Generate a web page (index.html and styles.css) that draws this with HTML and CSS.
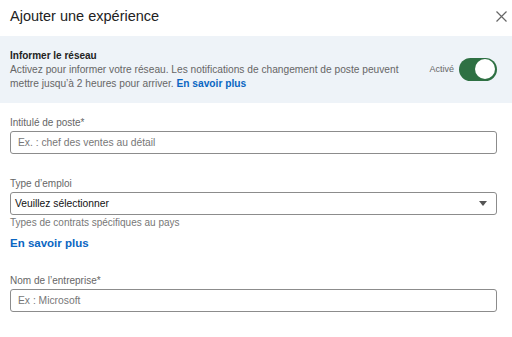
FILE: index.html
```html
<!DOCTYPE html>
<html lang="fr">
<head>
    <meta charset="UTF-8">
    <meta name="viewport" content="width=device-width, initial-scale=1.0">
    <title>Ajouter une expérience</title>
    <link rel="stylesheet" href="styles.css">
</head>
<body>
    <div class="modal">
        <div class="header">
            <h2>Ajouter une expérience</h2>
            <button class="close" aria-label="Fermer">
                <svg width="11" height="11" viewBox="0 0 11 11">
                    <path d="M0.5 0.5 L10.5 10.5 M10.5 0.5 L0.5 10.5" stroke="#666" stroke-width="1.2" fill="none"/>
                </svg>
            </button>
        </div>

        <!-- notify network band -->
        <div class="notify">
            <div class="notify-text">
                <p class="notify-title">Informer le réseau</p>
                <p class="notify-desc">Activez pour informer votre réseau. Les notifications de changement de poste peuvent mettre jusqu’à 2 heures pour arriver. <a href="#">En savoir plus</a></p>
            </div>
            <div class="switch-wrap">
                <span class="switch-label">Activé</span>
                <span class="switch"><span class="knob"></span></span>
            </div>
        </div>

        <div class="form">
            <div class="field">
                <label>Intitulé de poste*</label>
                <input type="text" placeholder="Ex. : chef des ventes au détail">
            </div>

            <div class="field">
                <label>Type d’emploi</label>
                <div class="select">
                    <span>Veuillez sélectionner</span>
                    <svg width="8" height="5" viewBox="0 0 8 5"><path d="M0 0 H8 L4 5 Z" fill="#555"/></svg>
                </div>
                <p class="hint">Types de contrats spécifiques au pays</p>
                <a href="#" class="more">En savoir plus</a>
            </div>

            <div class="field">
                <label>Nom de l’entreprise*</label>
                <input type="text" placeholder="Ex : Microsoft">
            </div>
        </div>
    </div>
</body>
</html>
```

FILE: styles.css
```css
* {
    margin: 0;
    padding: 0;
    box-sizing: border-box;
}

body {
    font-family: "Liberation Sans", Arial, sans-serif;
    background-color: #ffffff;
    color: #222;
}

/* Header */
.header {
    display: flex;
    justify-content: space-between;
    align-items: center;
    height: 36px;
    padding: 0 3px 4px 10px;
}

.header h2 {
    font-size: 14.5px;
    font-weight: normal;
    color: #222;
}

.close {
    background: none;
    border: none;
    width: 16px;
    height: 16px;
    display: flex;
    align-items: center;
    justify-content: center;
}

/* Notify band */
.notify {
    background-color: #eef3f8;
    display: flex;
    align-items: center;
    justify-content: space-between;
    padding: 11px 15px 12px 10px;
    height: 67px;
}

.notify-text {
    flex-shrink: 0;
}

.notify-title {
    font-size: 10px;
    font-weight: bold;
    color: #222;
    line-height: 15px;
}

.notify-desc {
    font-size: 10.2px;
    color: #666;
    line-height: 14px;
    width: 410px;
}

.notify-desc a,
.more {
    color: #0a66c2;
    font-weight: bold;
    text-decoration: none;
}

.switch-wrap {
    display: flex;
    align-items: center;
    gap: 5px;
}

.switch-label {
    font-size: 9px;
    color: #666;
}

.switch {
    width: 38px;
    height: 23px;
    border-radius: 12px;
    background-color: #2e7043;
    display: flex;
    align-items: center;
    justify-content: flex-end;
    padding-right: 2px;
}

.knob {
    width: 20px;
    height: 20px;
    border-radius: 50%;
    background-color: #fff;
}

/* Form */
.form {
    padding: 14px 15px 0 10px;
}

.field {
    margin-bottom: 24px;
}

.field label {
    display: block;
    font-size: 10px;
    color: #666;
    margin-bottom: 3px;
}

.field input[type="text"],
.select {
    width: 100%;
    height: 23px;
    border: 1px solid #8c8c8c;
    border-radius: 3px;
    font-family: inherit;
    font-size: 10.3px;
    padding: 0 7px;
    outline: none;
}

.field input::placeholder {
    color: #777;
}

.select {
    display: flex;
    align-items: center;
    justify-content: space-between;
    padding: 0 9px 0 4px;
    color: #111;
}

.hint {
    font-size: 10px;
    color: #777;
    margin-top: 2px;
}

.more {
    display: inline-block;
    font-size: 11.5px;
    margin-top: 9px;
}
```
